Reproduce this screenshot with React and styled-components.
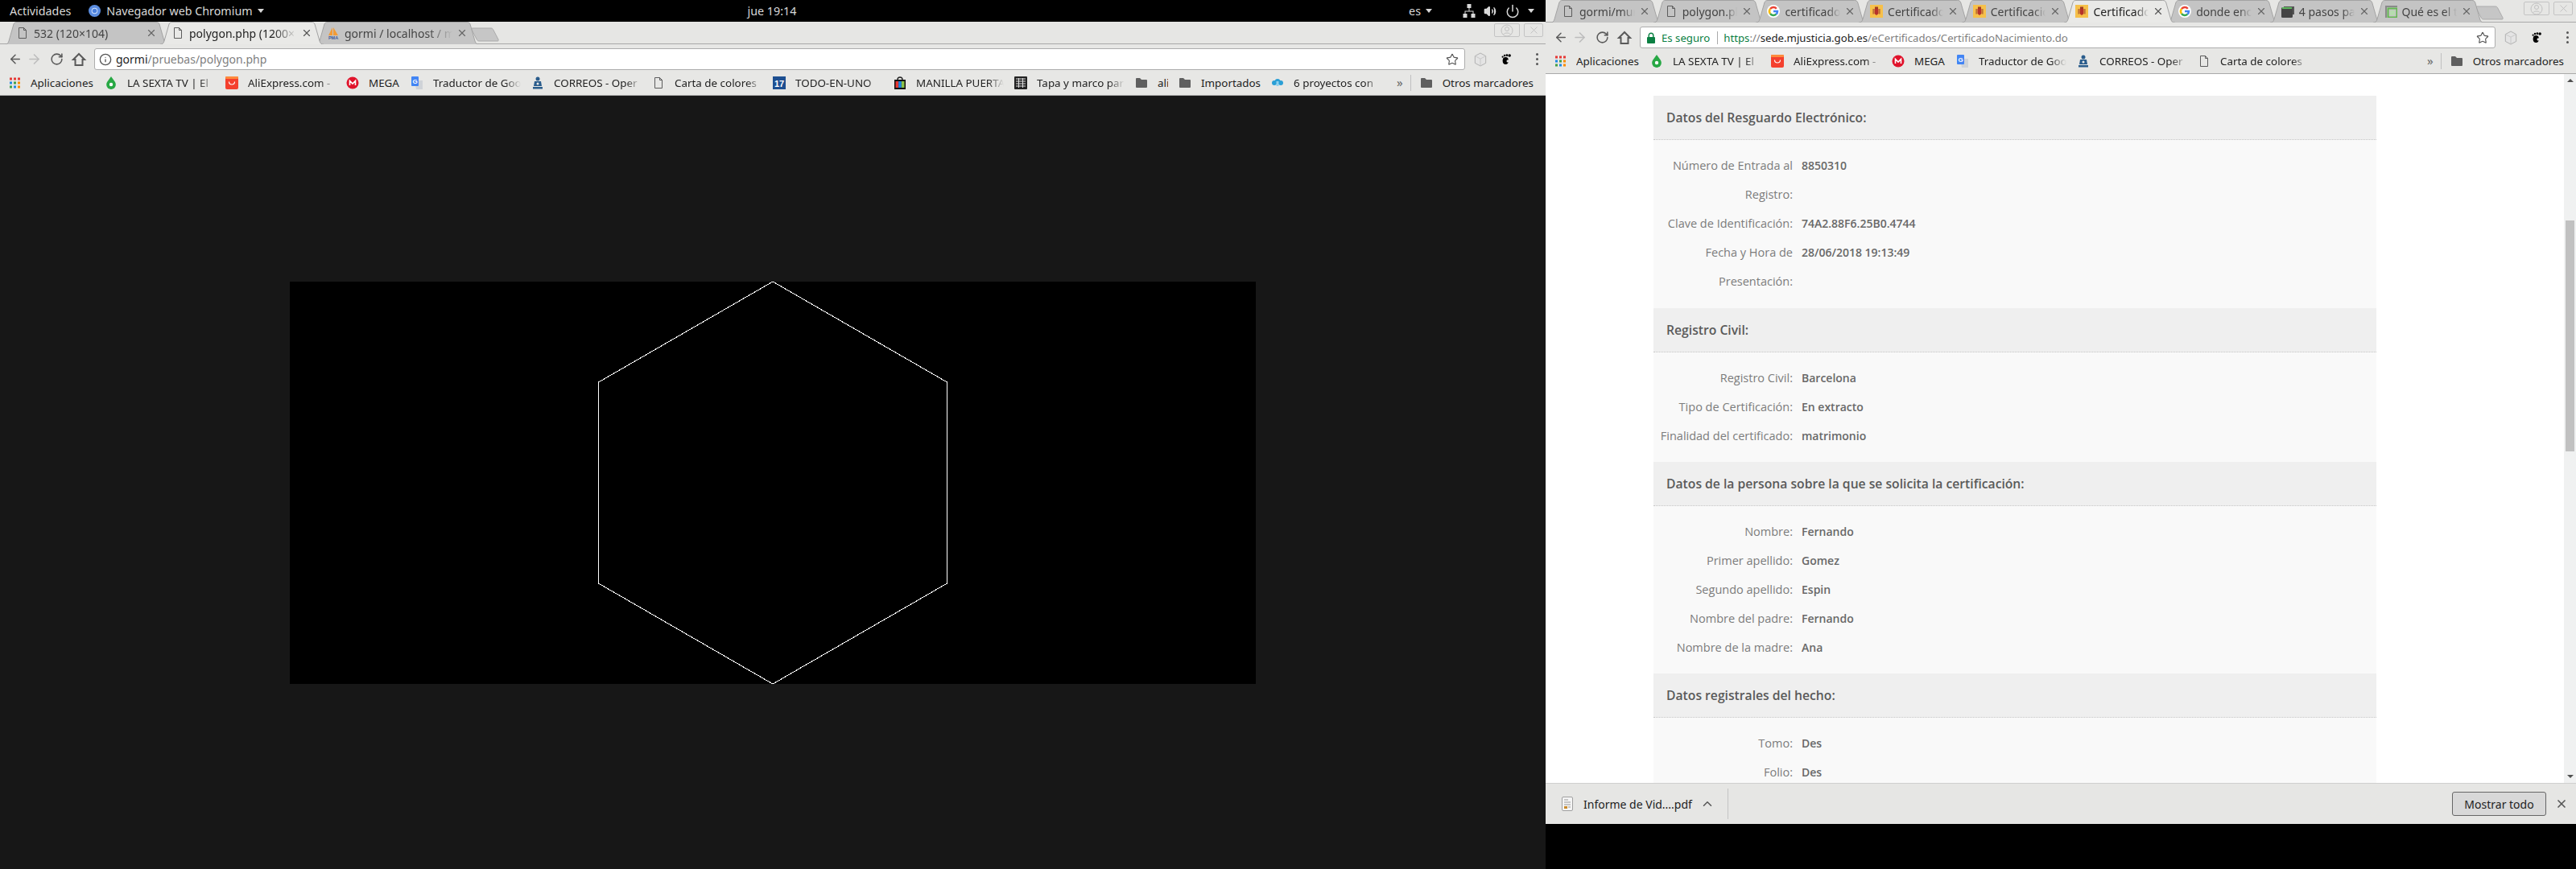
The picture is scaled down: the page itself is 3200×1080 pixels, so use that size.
import React from "react";
import styled, { createGlobalStyle } from "styled-components";
import { ArrowLeft, ArrowRight, RotateCw, Star, Info, X, ChevronUp, Power, Volume2 } from "lucide-react";

const GlobalStyle = createGlobalStyle`
  html, body {
    margin: 0;
    padding: 0;
    background: #000;
    overflow: hidden;
  }
  * { box-sizing: border-box; }
`;

const UI_FONT = `"Noto Sans", "Open Sans", sans-serif`;

const Screen = styled.div`
  display: flex;
  width: 3200px;
  height: 1080px;
  font-family: ${UI_FONT};
  background: #000;
`;

const LeftScreen = styled.div`
  display: flex;
  flex-direction: column;
  width: 1920px;
  height: 1080px;
  background: #171717;
`;

const RightScreen = styled.div`
  display: flex;
  flex-direction: column;
  width: 1280px;
  height: 1024px;
`;

/* gnome top bar */
const TopBar = styled.div`
  display: grid;
  grid-template-columns: 1fr auto 1fr;
  align-items: center;
  height: 27px;
  padding: 0 14px 0 12px;
  background: #000;
  color: #d8d8d8;
  font-size: 14.3px;
`;

const TopGroup = styled.div`
  display: flex;
  align-items: center;
  justify-content: ${(p) => (p.$end ? "flex-end" : "flex-start")};
`;

const AppName = styled.span`
  display: flex;
  align-items: center;
  gap: 7px;
  margin-left: 22px;
`;

const Caret = styled.span`
  width: 0;
  height: 0;
  margin-left: ${(p) => p.$gap || 6}px;
  border-left: 4.5px solid transparent;
  border-right: 4.5px solid transparent;
  border-top: 5px solid #d8d8d8;
`;

const TrayIcon = styled.span`
  display: flex;
  margin-left: ${(p) => p.$gap}px;
`;

/* tab strip */
const TabStrip = styled.div`
  display: flex;
  position: relative;
  height: 28px;
  padding-left: 6px;
  background: #e6e6e4;
  border-bottom: 1px solid #a9a9a9;
`;

const TabBox = styled.div`
  display: flex;
  position: relative;
  align-items: center;
  flex: none;
  width: ${(p) => p.$width}px;
  height: 28px;
  margin-right: -10px;
  padding: 0 14px;
  z-index: ${(p) => (p.$active ? 5 : 1)};
  font-size: 14px;
  color: ${(p) => (p.$active ? "#222" : "#444")};
`;

const TabShape = styled.svg`
  position: absolute;
  top: 0;
  left: 0;
`;

const TabIcon = styled.span`
  display: flex;
  position: relative;
  flex: none;
  width: 16px;
  height: 16px;
  margin-right: 6px;
`;

const TabTitle = styled.span`
  position: relative;
  flex: 1;
  min-width: 0;
  overflow: hidden;
  white-space: nowrap;
  -webkit-mask-image: linear-gradient(to right, #000 78%, transparent 100%);
  mask-image: linear-gradient(to right, #000 78%, transparent 100%);
`;

const TabClose = styled.span`
  display: flex;
  position: relative;
  flex: none;
  margin-left: 5px;
  color: ${(p) => (p.$active ? "#555" : "#666")};
`;

const NewTab = styled.svg`
  flex: none;
  align-self: flex-start;
  margin: 7px 0 0 0;
  position: relative;
`;

const WindowButtons = styled.div`
  display: flex;
  gap: 5px;
  margin-left: auto;
  padding: 2px ${(p) => p.$right}px 0 0;
`;

const WindowButton = styled.div`
  display: flex;
  align-items: center;
  justify-content: center;
  width: ${(p) => p.$width}px;
  height: 17px;
  border: 1px solid #c4c4c4;
  border-radius: 2px;
  color: #c0c0c0;
`;

/* toolbar */
const Toolbar = styled.div`
  display: flex;
  align-items: center;
  height: 33px;
  padding: 5px 0 1px 10px;
  background: #e7e7e5;
`;

const ToolIcon = styled.span`
  display: flex;
  align-items: center;
  justify-content: center;
  flex: none;
  width: ${(p) => p.$width || 28}px;
  color: ${(p) => (p.$off ? "#bdbdbd" : "#5a5a5a")};
`;

const Omnibox = styled.div`
  display: flex;
  align-items: center;
  flex: 1;
  height: 27px;
  margin-left: 5px;
  padding: 0 7px 0 5px;
  background: #fff;
  border: 1px solid #adadad;
  border-radius: 3px;
  font-size: ${(p) => p.$size}px;
  white-space: nowrap;
`;

const OmniIcon = styled.span`
  display: flex;
  flex: none;
  width: 16px;
  margin-right: 5px;
  justify-content: center;
  color: ${(p) => p.$color || "#555"};
`;

const Secure = styled.span`
  color: #0b8043;
`;

const OmniSep = styled.span`
  width: 1px;
  height: 16px;
  margin: 0 7px 0 9px;
  background: #aaa;
`;

const Strong = styled.span`
  color: #222;
`;

const Muted = styled.span`
  color: #808080;
`;

const StarSlot = styled.span`
  display: flex;
  margin-left: auto;
  color: #555;
`;

const ToolEnd = styled.div`
  display: flex;
  flex: none;
  align-items: center;
  width: 100px;
  padding-left: 2px;
`;

const MenuDots = styled.span`
  display: flex;
  flex-direction: column;
  gap: 3px;
  margin-left: 22px;
`;

const Dot = styled.i`
  width: 3px;
  height: 3px;
  border-radius: 50%;
  background: #555;
`;

/* bookmarks */
const BookmarkBar = styled.div`
  display: flex;
  align-items: center;
  height: 31px;
  padding: 0 15px 1px 10px;
  background: #e7e7e5;
  border-bottom: 1px solid #a9a9a9;
  font-size: 13.4px;
  color: #222;
`;

const Bookmark = styled.div`
  display: flex;
  align-items: center;
  flex: none;
  margin-right: 13px;
`;

const BookmarkIcon = styled.span`
  display: flex;
  flex: none;
  width: 16px;
  height: 16px;
  margin-right: 12px;
  color: #5a5a5a;
`;

const BookmarkLabel = styled.span`
  flex: none;
  width: ${(p) => p.$width}px;
  overflow: hidden;
  white-space: nowrap;
  ${(p) =>
    p.$fade &&
    `-webkit-mask-image: linear-gradient(to right, #000 82%, transparent 100%);
     mask-image: linear-gradient(to right, #000 82%, transparent 100%);`}
`;

const BookmarkEnd = styled.div`
  display: flex;
  align-items: center;
  margin-left: auto;
`;

const More = styled.span`
  color: #666;
  font-size: 15px;
  line-height: 1;
`;

const EndSep = styled.span`
  width: 1px;
  height: 20px;
  margin: 0 11px 0 9px;
  background: #c0c0c0;
`;

/* left page */
const Canvas = styled.div`
  width: 1200px;
  height: 500px;
  margin: 231px auto 0;
  background: #000;
`;

/* right page */
const PageRow = styled.div`
  display: flex;
  flex: 1;
  min-height: 0;
  background: #fff;
`;

const PageScroll = styled.div`
  flex: 1;
  overflow: hidden;
  padding: 27px 0 0 134px;
`;

const Certificate = styled.div`
  width: 898px;
  background: #f9f9f9;
  font-family: "Open Sans", sans-serif;
  font-size: 14.5px;
`;

const SectionHead = styled.div`
  display: flex;
  align-items: center;
  height: 55px;
  padding-left: 16px;
  background: #efefef;
  border-bottom: 1px dotted #c8c8c8;
  color: #5a5a5a;
  font-size: 15.7px;
  font-weight: 600;
`;

const SectionBody = styled.div`
  padding: 14px 0 ${(p) => (p.$first ? 15 : 14)}px;
`;

const Row = styled.div`
  display: grid;
  grid-template-columns: 173px 1fr;
  column-gap: 11px;
  line-height: 36px;
`;

const Label = styled.div`
  text-align: right;
  color: #7c7c7c;
`;

const Value = styled.div`
  color: #686868;
  font-size: 14px;
  font-weight: 600;
`;

const Scrollbar = styled.div`
  display: flex;
  flex-direction: column;
  align-items: center;
  flex: none;
  width: 15px;
  padding-top: 6px;
  background: #f0f1f1;
`;

const ArrowUp = styled.span`
  border-left: 4px solid transparent;
  border-right: 4px solid transparent;
  border-bottom: 4px solid #505050;
`;

const ArrowDown = styled.span`
  margin-top: auto;
  margin-bottom: 6px;
  border-left: 4px solid transparent;
  border-right: 4px solid transparent;
  border-top: 4px solid #505050;
`;

const Thumb = styled.div`
  width: 11px;
  height: 287px;
  margin-top: 172px;
  background: #c1c1c1;
`;

/* downloads */
const DownloadBar = styled.div`
  display: flex;
  align-items: center;
  flex: none;
  height: 51px;
  padding-left: 20px;
  background: #e6e6e4;
  border-top: 1px solid #cfcfcf;
  font-size: 14px;
  color: #222;
`;

const FileName = styled.span`
  margin-left: 13px;
`;

const ChevronSlot = styled.span`
  display: flex;
  margin-left: 10px;
  color: #555;
`;

const DownloadSep = styled.span`
  width: 1px;
  height: 38px;
  margin-left: 16px;
  background: #c4c4c4;
`;

const ShowAll = styled.button`
  width: 117px;
  height: 30px;
  margin-left: auto;
  padding: 0;
  background: #d8d8d8;
  border: 1px solid #666;
  border-radius: 3px;
  font-family: ${UI_FONT};
  font-size: 14px;
  color: #222;
`;

const CloseBar = styled.span`
  display: flex;
  margin: 0 10px 0 11px;
  color: #555;
`;

/* icons */
const Doc = () => (
  <svg width="16" height="16" viewBox="0 0 16 16" fill="none" stroke="#5c5c5c" strokeWidth="1">
    <path d="M3.5 1.5h6l3 3v10h-9zM9.5 1.5v3h3" />
  </svg>
);

const GoogleG = () => (
  <svg width="16" height="16" viewBox="0 0 16 16" fill="none">
    <circle cx="8" cy="8" r="8" fill="#fff" />
    <path d="M11.8 4.700A5 5 0 0 0 4 5" stroke="#ea4335" strokeWidth="2.500" />
    <path d="M4 5a5 5 0 0 0 0 6" stroke="#fbbc05" strokeWidth="2.500" />
    <path d="M4 11a5 5 0 0 0 7.400 .7" stroke="#34a853" strokeWidth="2.500" />
    <path d="M11.400 11.700A5 5 0 0 0 13 8H8" stroke="#4285f4" strokeWidth="2.500" />
  </svg>
);

const Flag = () => (
  <svg width="16" height="16" viewBox="0 0 16 16">
    <rect width="16" height="16" fill="#f6c04a" />
    <path d="M5.500 5h5v6l-2.500 2-2.500-2z" fill="#b5332a" />
    <rect x="6" y="2.500" width="4" height="2.500" fill="#a03a22" />
    <rect x="3.500" y="5" width="1.200" height="6.500" fill="#a8552c" />
    <rect x="11.300" y="5" width="1.200" height="6.500" fill="#a8552c" />
  </svg>
);

const Pma = () => (
  <svg width="16" height="16" viewBox="0 0 16 16">
    <path d="M2 11L7 1v10zM8 11V1l6 10z" fill="#f29b36" />
    <text x="8" y="15.500" textAnchor="middle" fontSize="5.500" fontWeight="700" fontFamily="Liberation Sans" fill="#3c5a9a">
      PMA
    </text>
  </svg>
);

const Pasos = () => (
  <svg width="16" height="16" viewBox="0 0 16 16">
    <path d="M3 2h13v10h-2V4H3z" fill="#555" />
    <rect y="3" width="14" height="13" rx="1.500" fill="#444" />
    <rect x="1" y="3" width="12" height="2" fill="#5cb85c" />
  </svg>
);

const Que = () => (
  <svg width="16" height="16" viewBox="0 0 16 16">
    <path d="M1 16V1h15v2H3v13z" fill="#8a8a8a" />
    <rect x="4.500" y="4.500" width="11" height="11" fill="none" stroke="#63b750" strokeWidth="2" />
    <rect x="7" y="7" width="6" height="6" fill="#b6dcae" />
  </svg>
);

const Apps = () => (
  <svg width="16" height="16" viewBox="0 0 16 16">
    {[
      "#e53935", "#e53935", "#e53935",
      "#1e88e5", "#43a047", "#fb8c00",
      "#43a047", "#1e88e5", "#fb8c00",
    ].map((c, i) => (
      <rect key={i} x={2 + (i % 3) * 5} y={1.5 + Math.floor(i / 3) * 5} width="3" height="3" fill={c} />
    ))}
  </svg>
);

const Sexta = () => (
  <svg width="16" height="16" viewBox="0 0 16 16">
    <path d="M8 0l5 7a6 6 0 0 1-5 9 6 6 0 0 1-5-9z" fill="#27a844" />
    <circle cx="8" cy="10" r="2.200" fill="#fff" />
  </svg>
);

const Ali = () => (
  <svg width="16" height="16" viewBox="0 0 16 16" fill="none">
    <rect width="16" height="16" rx="2" fill="#f4402e" />
    <rect width="16" height="3" rx="1" fill="#ff8a3c" />
    <path d="M4.500 6.500a3.500 3.500 0 0 0 7 0" stroke="#fff" strokeWidth="1.200" />
  </svg>
);

const Mega = () => (
  <svg width="16" height="16" viewBox="0 0 16 16">
    <circle cx="8" cy="8" r="7.500" fill="#e0132b" />
    <path d="M4.500 11V5.500L8 9l3.500-3.500V11" fill="none" stroke="#fff" strokeWidth="1.600" />
  </svg>
);

const Translate = () => (
  <svg width="16" height="16" viewBox="0 0 16 16">
    <path d="M5 5h10v11H7z" fill="#cfd3d8" />
    <rect x="1" width="9" height="12" rx="1" fill="#4285f4" />
    <text x="5.500" y="9" textAnchor="middle" fontSize="8" fontWeight="700" fontFamily="Liberation Sans" fill="#fff">
      G
    </text>
  </svg>
);

const Correos = () => (
  <svg width="16" height="16" viewBox="0 0 16 16" fill="#2b5d8c">
    <circle cx="8" cy="3" r="2.500" />
    <path d="M4 6h8l1 6H3z" />
    <rect x="2" y="13" width="12" height="2.500" />
    <circle cx="8" cy="9" r="1.500" fill="#e7e7e5" />
  </svg>
);

const Calendar = () => (
  <svg width="16" height="16" viewBox="0 0 16 16">
    <rect width="16" height="16" fill="#1d4f91" />
    <text x="8" y="12.500" textAnchor="middle" fontSize="11" fontWeight="700" fontFamily="Liberation Sans" fill="#fff">
      17
    </text>
  </svg>
);

const Bag = () => (
  <svg width="16" height="16" viewBox="0 0 16 16">
    <path d="M5 4a3 3 0 0 1 6 0" fill="none" stroke="#222" strokeWidth="1.400" />
    <rect x="1" y="4" width="14" height="12" fill="#111" />
    <rect x="2.500" y="6" width="3.600" height="8" fill="#e53935" />
    <rect x="6.200" y="6" width="3.600" height="8" fill="#1e88e5" />
    <rect x="9.900" y="6" width="3.600" height="8" fill="#8bc34a" />
  </svg>
);

const Tapa = () => (
  <svg width="16" height="16" viewBox="0 0 16 16">
    <rect width="16" height="16" rx="1" fill="#222" />
    <path d="M2 3h12M2 6h12M2 9h12M2 12h12M5.500 2v12M10.500 2v12" stroke="#ddd" strokeWidth="1" />
  </svg>
);

const Folder = () => (
  <svg width="16" height="16" viewBox="0 0 16 16" fill="#5f5f5f">
    <path d="M1 3a1 1 0 0 1 1-1h4l2 2h6a1 1 0 0 1 1 1v8a1 1 0 0 1-1 1H2a1 1 0 0 1-1-1z" />
  </svg>
);

const Cloud = () => (
  <svg width="16" height="16" viewBox="0 0 16 16" fill="#2a9fd6">
    <circle cx="4" cy="8" r="3" />
    <circle cx="8" cy="6.500" r="3.500" />
    <circle cx="12" cy="8" r="3" />
    <rect x="6.500" y="6" width="3" height="6" fill="#8fd0ee" />
  </svg>
);

const Home = () => (
  <svg width="20" height="20" viewBox="0 0 20 20" fill="none" stroke="currentColor" strokeWidth="2">
    <path d="M10 3L3 10h2.500v7h9v-7H17z" />
  </svg>
);

const Lock = () => (
  <svg width="12" height="14" viewBox="0 0 12 14">
    <rect x="1" y="6" width="10" height="8" rx="1" fill="#0b8043" />
    <path d="M3.200 6V4a2.800 2.800 0 0 1 5.600 0v2" fill="none" stroke="#0b8043" strokeWidth="1.400" />
  </svg>
);

const Cube = () => (
  <svg width="16" height="18" viewBox="0 0 18 20">
    <path d="M9 1l7.500 4v10L9 19l-7.500-4V5z" fill="#e4e4e4" stroke="#aaa" />
    <path d="M1.500 5L9 9l7.500-4M9 9v10" fill="none" stroke="#c4c4c4" />
  </svg>
);

const Foot = () => (
  <svg width="13" height="15" viewBox="0 0 16 18" fill="#000">
    <ellipse cx="6.500" cy="11.500" rx="4.500" ry="5.500" />
    <circle cx="10" cy="12" r="2" fill="#e7e7e5" />
    <circle cx="2" cy="5.500" r="1.300" />
    <circle cx="5" cy="3.500" r="1.500" />
    <circle cx="8.500" cy="3" r="1.700" />
    <circle cx="12.500" cy="3.500" r="2.200" />
  </svg>
);

const ChromiumLogo = () => (
  <svg width="15" height="15" viewBox="0 0 15 15">
    <circle cx="7.500" cy="7.500" r="7.500" fill="#5b8de0" />
    <circle cx="7.500" cy="7.500" r="3.800" fill="#cfe0fa" />
    <circle cx="7.500" cy="7.500" r="2.800" fill="#4a7fdc" />
  </svg>
);

const Network = () => (
  <svg width="16" height="17" viewBox="0 0 16 17" fill="#d8d8d8">
    <rect x="5.500" y="0" width="5" height="5" />
    <rect x="0.500" y="12" width="5" height="5" />
    <rect x="10.500" y="12" width="5" height="5" />
    <path d="M7.500 5h1v3.500H13.500V12h-1V9.500h-9V12h-1V8.500h5z" />
  </svg>
);

const PdfFile = () => (
  <svg width="14" height="18" viewBox="0 0 14 18">
    <rect x="0.500" y="0.500" width="13" height="17" rx="1.500" fill="#f4f4f4" stroke="#a0a0a0" />
    <path d="M3 4h5M3 7h8M3 10h8M8 13h3" stroke="#999" />
    <rect x="3" y="12" width="4" height="3" fill="#c98a2b" />
  </svg>
);

const Person = () => (
  <svg width="16" height="16" viewBox="0 0 16 16" fill="none" stroke="currentColor">
    <circle cx="8" cy="8" r="7" />
    <circle cx="8" cy="6" r="2.500" />
    <path d="M4 12.500c1-2 7-2 8 0" />
  </svg>
);

/* shared pieces */
const tabPath = (w) =>
  `M0 28 C3 28 4 27 5 24 L11 3 C12 1 13 0.5 15 0.5 L${w - 15} 0.5 C${w - 13} 0.5 ${w - 12} 1 ${w - 11} 3 L${w - 5} 24 C${w - 4} 27 ${w - 3} 28 ${w} 28`;

const Tab = ({ width, title, icon, active }) => (
  <TabBox $width={width} $active={active}>
    <TabShape width={width} height="28" viewBox={`0 0 ${width} 28`}>
      <path d={tabPath(width)} fill={active ? "#e9e9e7" : "#c4c4c4"} stroke="#a3a3a3" />
    </TabShape>
    <TabIcon>{icon}</TabIcon>
    <TabTitle>{title}</TabTitle>
    <TabClose $active={active}>
      <X size={14} strokeWidth={2} />
    </TabClose>
  </TabBox>
);

const Chrome = ({ tabs, tabWidth, buttonRight, address, addressSize, bookmarks }) => (
  <>
    <TabStrip>
      {tabs.map((t) => (
        <Tab key={t.title + t.close} width={tabWidth} {...t} />
      ))}
      <NewTab width="36" height="18" viewBox="0 0 36 18">
        <path d="M2 1h23c1 0 2 .5 2.500 1.500L34 15c.5 1.500 0 2-1 2H10c-1 0-2-.5-2.500-1.500L1 3C.5 1.500 1 1 2 1z" fill="#c6c6c6" stroke="#ababab" />
      </NewTab>
      <WindowButtons $right={buttonRight}>
        <WindowButton $width={32}>
          <Person />
        </WindowButton>
        <WindowButton $width={24}>
          <X size={15} strokeWidth={1.500} />
        </WindowButton>
      </WindowButtons>
    </TabStrip>
    <Toolbar>
      <ToolIcon $width={18}>
        <ArrowLeft size={19} strokeWidth={2} />
      </ToolIcon>
      <ToolIcon $off>
        <ArrowRight size={19} strokeWidth={2} />
      </ToolIcon>
      <ToolIcon>
        <RotateCw size={17} strokeWidth={2.200} />
      </ToolIcon>
      <ToolIcon>
        <Home />
      </ToolIcon>
      <Omnibox $size={addressSize}>
        {address}
        <StarSlot>
          <Star size={16} strokeWidth={1.700} />
        </StarSlot>
      </Omnibox>
      <ToolEnd>
        <ToolIcon $width={34}>
          <Cube />
        </ToolIcon>
        <ToolIcon $width={30}>
          <Foot />
        </ToolIcon>
        <MenuDots>
          <Dot />
          <Dot />
          <Dot />
        </MenuDots>
      </ToolEnd>
    </Toolbar>
    <BookmarkBar>
      {bookmarks.map((b) => (
        <Bookmark key={b.label}>
          <BookmarkIcon>{b.icon}</BookmarkIcon>
          <BookmarkLabel $width={b.width} $fade={b.fade}>
            {b.label}
          </BookmarkLabel>
        </Bookmark>
      ))}
      <BookmarkEnd>
        <More>»</More>
        <EndSep />
        <BookmarkIcon>
          <Folder />
        </BookmarkIcon>
        <span>Otros marcadores</span>
      </BookmarkEnd>
    </BookmarkBar>
  </>
);

const baseBookmarks = [
  { icon: <Apps />, label: "Aplicaciones", width: 79 },
  { icon: <Sexta />, label: "LA SEXTA TV | El", width: 109, fade: true },
  { icon: <Ali />, label: "AliExpress.com -", width: 109, fade: true },
  { icon: <Mega />, label: "MEGA", width: 39 },
  { icon: <Translate />, label: "Traductor de Goo", width: 109, fade: true },
  { icon: <Correos />, label: "CORREOS - Oper", width: 109, fade: true },
  { icon: <Doc />, label: "Carta de colores", width: 109, fade: true },
];

const leftBookmarks = [
  ...baseBookmarks,
  { icon: <Calendar />, label: "TODO-EN-UNO", width: 109, fade: true },
  { icon: <Bag />, label: "MANILLA PUERTA", width: 109, fade: true },
  { icon: <Tapa />, label: "Tapa y marco par", width: 109, fade: true },
  { icon: <Folder />, label: "ali", width: 13 },
  { icon: <Folder />, label: "Importados", width: 74 },
  { icon: <Cloud />, label: "6 proyectos con", width: 108, fade: true },
];

const leftTabs = [
  { icon: <Doc />, title: "532 (120×104)", close: 1 },
  { icon: <Doc />, title: "polygon.php (1200×", active: true, close: 2 },
  { icon: <Pma />, title: "gormi / localhost / m", close: 3 },
];

const rightTabs = [
  { icon: <Doc />, title: "gormi/mun", close: 1 },
  { icon: <Doc />, title: "polygon.ph", close: 2 },
  { icon: <GoogleG />, title: "certificado", close: 3 },
  { icon: <Flag />, title: "Certificado", close: 4 },
  { icon: <Flag />, title: "Certificació", close: 5 },
  { icon: <Flag />, title: "Certificado", active: true, close: 6 },
  { icon: <GoogleG />, title: "donde enc", close: 7 },
  { icon: <Pasos />, title: "4 pasos pa", close: 8 },
  { icon: <Que />, title: "Qué es el t", close: 9 },
];

const sections = [
  {
    title: "Datos del Resguardo Electrónico:",
    rows: [
      ["Número de Entrada al Registro:", "8850310"],
      ["Clave de Identificación:", "74A2.88F6.25B0.4744"],
      ["Fecha y Hora de Presentación:", "28/06/2018 19:13:49"],
    ],
  },
  {
    title: "Registro Civil:",
    rows: [
      ["Registro Civil:", "Barcelona"],
      ["Tipo de Certificación:", "En extracto"],
      ["Finalidad del certificado:", "matrimonio"],
    ],
  },
  {
    title: "Datos de la persona sobre la que se solicita la certificación:",
    rows: [
      ["Nombre:", "Fernando"],
      ["Primer apellido:", "Gomez"],
      ["Segundo apellido:", "Espin"],
      ["Nombre del padre:", "Fernando"],
      ["Nombre de la madre:", "Ana"],
    ],
  },
  {
    title: "Datos registrales del hecho:",
    rows: [
      ["Tomo:", "Des"],
      ["Folio:", "Des"],
    ],
  },
];

const hexagon = "600,0 816.5,125 816.5,375 600,500 383.5,375 383.5,125";

const App = () => (
  <Screen>
    <GlobalStyle />
    <LeftScreen>
      <TopBar>
        <TopGroup>
          <span>Actividades</span>
          <AppName>
            <ChromiumLogo />
            Navegador web Chromium
          </AppName>
          <Caret />
        </TopGroup>
        <span>jue 19:14</span>
        <TopGroup $end>
          <span>es</span>
          <Caret />
          <TrayIcon $gap={38}>
            <Network />
          </TrayIcon>
          <TrayIcon $gap={10}>
            <Volume2 size={16} fill="#d8d8d8" />
          </TrayIcon>
          <TrayIcon $gap={11}>
            <Power size={18} />
          </TrayIcon>
          <Caret $gap={10} />
        </TopGroup>
      </TopBar>
      <Chrome
        tabs={leftTabs}
        tabWidth={203}
        buttonRight={3}
        bookmarks={leftBookmarks}
        addressSize={14}
        address={
          <>
            <OmniIcon>
              <Info size={16} strokeWidth={2} />
            </OmniIcon>
            <Strong>gormi</Strong>
            <Muted>/pruebas/polygon.php</Muted>
          </>
        }
      />
      <Canvas>
        <svg width="1200" height="500" viewBox="0 0 1200 500" shapeRendering="crispEdges">
          <polygon points={hexagon} fill="none" stroke="#fff" strokeWidth="1" />
        </svg>
      </Canvas>
    </LeftScreen>
    <RightScreen>
      <Chrome
        tabs={rightTabs}
        tabWidth={137.7}
        buttonRight={4}
        bookmarks={baseBookmarks}
        addressSize={13.2}
        address={
          <>
            <OmniIcon $color="#0b8043">
              <Lock />
            </OmniIcon>
            <Secure>Es seguro</Secure>
            <OmniSep />
            <Secure>https</Secure>
            <Muted>://</Muted>
            <Strong>sede.mjusticia.gob.es</Strong>
            <Muted>/eCertificados/CertificadoNacimiento.do</Muted>
          </>
        }
      />
      <PageRow>
        <PageScroll>
          <Certificate>
            {sections.map((s, i) => (
              <div key={s.title}>
                <SectionHead>{s.title}</SectionHead>
                <SectionBody $first={i === 0}>
                  {s.rows.map(([label, value]) => (
                    <Row key={label}>
                      <Label>{label}</Label>
                      <Value>{value}</Value>
                    </Row>
                  ))}
                </SectionBody>
              </div>
            ))}
          </Certificate>
        </PageScroll>
        <Scrollbar>
          <ArrowUp />
          <Thumb />
          <ArrowDown />
        </Scrollbar>
      </PageRow>
      <DownloadBar>
        <PdfFile />
        <FileName>Informe de Vid....pdf</FileName>
        <ChevronSlot>
          <ChevronUp size={18} strokeWidth={2} />
        </ChevronSlot>
        <DownloadSep />
        <ShowAll>Mostrar todo</ShowAll>
        <CloseBar>
          <X size={16} strokeWidth={2.500} />
        </CloseBar>
      </DownloadBar>
    </RightScreen>
  </Screen>
);

export default App;
